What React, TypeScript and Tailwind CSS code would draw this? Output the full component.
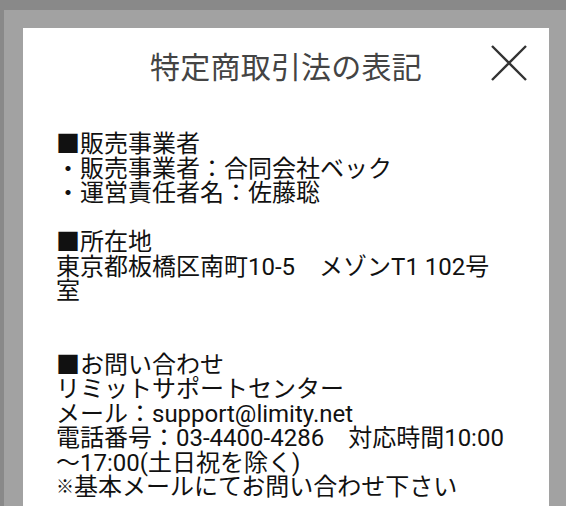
import React from "react";

const font = { fontFamily: '"Roboto", "Noto Sans CJK JP", sans-serif' };

export default function App() {
  return (
    <div className="w-[566px] h-[506px] overflow-hidden bg-[#898989] pt-[10px] pl-[4px]" style={font}>
      <div className="h-full bg-[#a2a2a2] pl-[19px] pt-[18px] pr-[17px]">
        <div className="bg-white h-full">
          {/* Header */}
          <div className="relative flex items-center justify-center h-[80px]">
            <h1 className="text-[30px] leading-none text-[#444] tracking-[0.2px]">特定商取引法の表記</h1>
            <button className="absolute right-[22px] top-[17px] w-[36px] h-[36px] text-[#333]" aria-label="close">
              <svg viewBox="0 0 36 36" className="w-full h-full" fill="none" stroke="currentColor" strokeWidth="2.4">
                <path d="M1 1 L35 35 M35 1 L1 35" />
              </svg>
            </button>
          </div>

          {/* Body */}
          <div className="pl-[33px] pr-[36px] pt-[24px] text-[24px] leading-[24.5px] text-[#111]">
            <p>■販売事業者</p>
            <p>・販売事業者：合同会社ベック</p>
            <p>・運営責任者名：佐藤聡</p>
            <p>&nbsp;</p>
            <p>■所在地</p>
            <p>東京都板橋区南町10-5　メゾンT1 102号室</p>
            <p>&nbsp;</p>
            <p>&nbsp;</p>
            <p>■お問い合わせ</p>
            <p>リミットサポートセンター</p>
            <p>メール：support@limity.net</p>
            <p>
              電話番号：03-4400-4286　対応時間10:00<wbr />〜17:00(土日祝を除く)
            </p>
            <p>
              <span className="text-[18px] align-[2px]">※</span>基本メールにてお問い合わせ下さい
            </p>
          </div>
        </div>
      </div>
    </div>
  );
}
